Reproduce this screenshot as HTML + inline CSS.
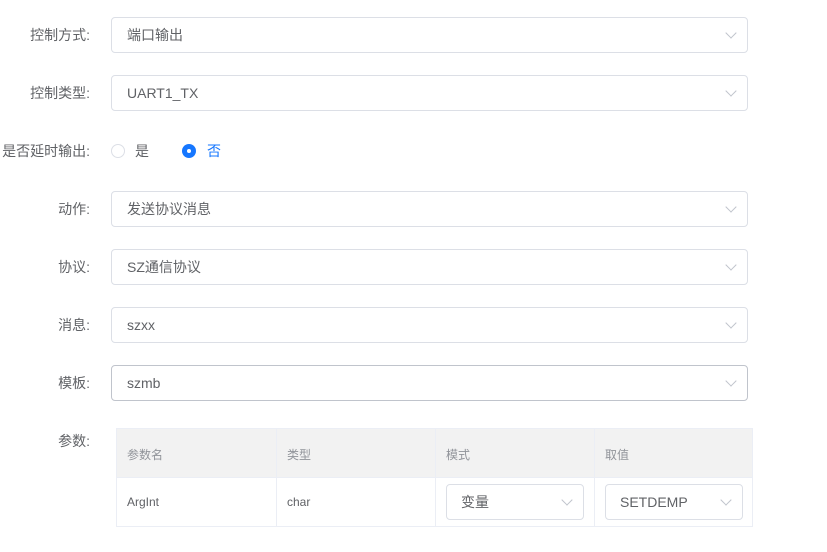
<!DOCTYPE html>
<html><head><meta charset="utf-8"><style>
*{box-sizing:border-box;margin:0;padding:0}
body{width:827px;height:552px;background:#fff;font-family:"Liberation Sans","Noto Sans CJK SC",sans-serif;color:#606266;position:relative;overflow:hidden}
.lbl{position:absolute;right:737px;font-size:14px;color:#606266;white-space:nowrap;line-height:20px}
.sel{position:absolute;left:111px;width:637px;height:36px;border:1px solid #dcdfe6;border-radius:4px;font-size:14px;line-height:34px;padding-left:15px;color:#606266}
.sel.dark{border-color:#c0c4cc}
.arr{position:absolute;right:12px;top:11px;width:8px;height:8px;border-right:1px solid #c0c4cc;border-bottom:1px solid #c0c4cc;transform:rotate(45deg)}
.cell{position:absolute;font-size:12px;line-height:20px}
</style></head><body>
<div class="lbl" style="top:25px">控制方式:</div>
<div class="sel" style="top:17px">端口输出<i class="arr"></i></div>
<div class="lbl" style="top:83px">控制类型:</div>
<div class="sel" style="top:75px">UART1_TX<i class="arr"></i></div>
<div class="lbl" style="top:141px">是否延时输出:</div>
<div style="position:absolute;left:111px;top:144px;width:14px;height:14px;border:1px solid #dcdfe6;border-radius:50%"></div>
<div style="position:absolute;left:135px;top:141px;font-size:14px;line-height:20px">是</div>
<div style="position:absolute;left:182px;top:144px;width:14px;height:14px;background:#1677ff;border-radius:50%"><div style="position:absolute;left:5px;top:5px;width:4px;height:4px;background:#fff;border-radius:50%"></div></div>
<div style="position:absolute;left:207px;top:141px;font-size:14px;line-height:20px;color:#1677ff">否</div>
<div class="lbl" style="top:199px">动作:</div>
<div class="sel" style="top:191px">发送协议消息<i class="arr"></i></div>
<div class="lbl" style="top:257px">协议:</div>
<div class="sel" style="top:249px">SZ通信协议<i class="arr"></i></div>
<div class="lbl" style="top:315px">消息:</div>
<div class="sel" style="top:307px">szxx<i class="arr"></i></div>
<div class="lbl" style="top:373px">模板:</div>
<div class="sel dark" style="top:365px">szmb<i class="arr"></i></div>
<div class="lbl" style="top:431px">参数:</div>
<div style="position:absolute;left:116px;top:428px;width:637px;height:99px;border:1px solid #ebeef5;background:#fff">
 <div style="position:absolute;left:0;top:0;width:100%;height:49px;background:#f2f2f2;border-bottom:1px solid #ebeef5"></div>
 <div style="position:absolute;left:159px;top:0;width:1px;height:100%;background:#ebeef5"></div>
 <div style="position:absolute;left:318px;top:0;width:1px;height:100%;background:#ebeef5"></div>
 <div style="position:absolute;left:477px;top:0;width:1px;height:100%;background:#ebeef5"></div>
 <div class="cell" style="left:10px;top:16px;color:#909399">参数名</div>
 <div class="cell" style="left:170px;top:16px;color:#909399">类型</div>
 <div class="cell" style="left:329px;top:16px;color:#909399">模式</div>
 <div class="cell" style="left:488px;top:16px;color:#909399">取值</div>
 <div class="cell" style="left:10px;top:63px">ArgInt</div>
 <div class="cell" style="left:170px;top:63px">char</div>
</div>
<div class="sel" style="left:446px;top:484px;width:138px;padding-left:14px">变量<i class="arr"></i></div>
<div class="sel" style="left:605px;top:484px;width:138px;padding-left:14px">SETDEMP<i class="arr"></i></div>
</body></html>
